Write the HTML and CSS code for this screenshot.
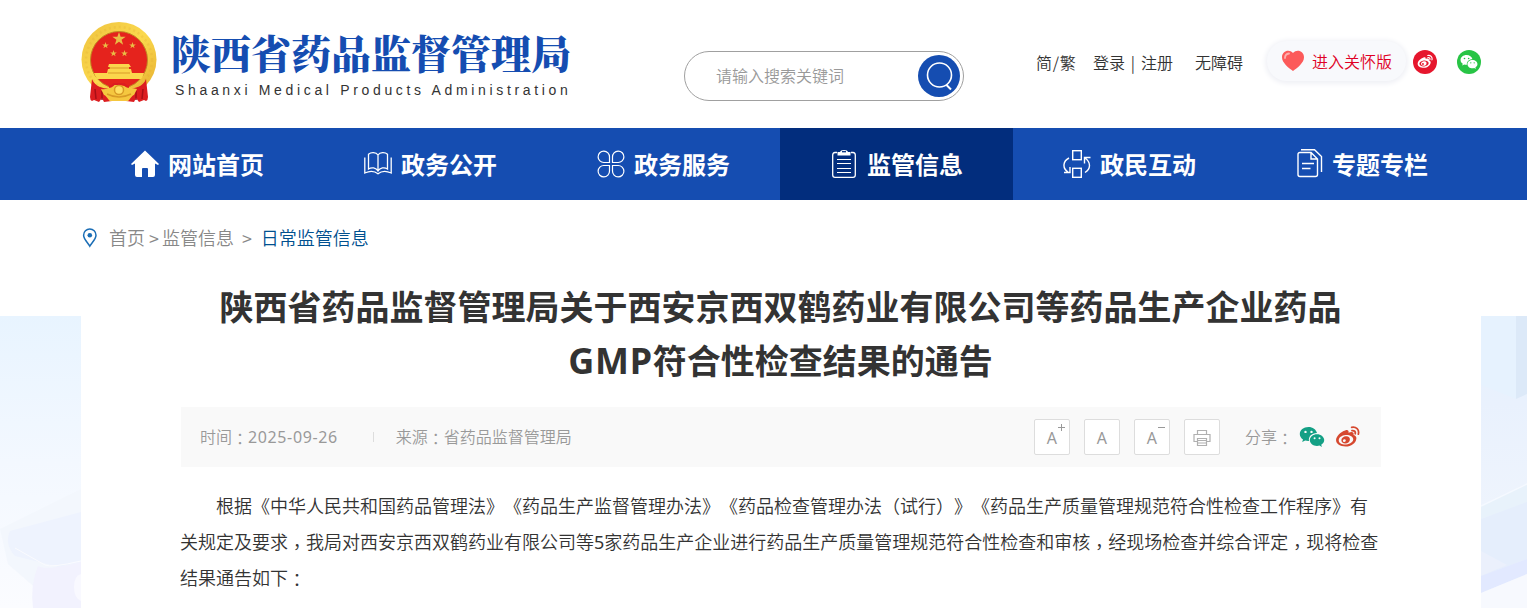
FILE: index.html
```html
<!DOCTYPE html>
<html lang="zh-CN">
<head>
  <meta charset="UTF-8">
  <meta name="viewport" content="width=device-width, initial-scale=1.0">
  <title>陕西省药品监督管理局</title>
  <link rel="stylesheet" href="styles.css">
</head>
<body>
  <svg class="symbols" width="0" height="0">
    <symbol id="weibo" viewBox="0 0 24 24">
      <path fill="currentColor" fill-rule="evenodd" d="M9.800 5.200c2-.8 3.700-.3 3.200 2.200 3-1.300 5.600-.7 4.800 2.100 2 .6 3 1.900 2.700 3.700-.6 4.400-5 7.500-10.200 7.500C5 20.700 1 18.300 1 14.500c0-3.700 4.700-8.200 8.800-9.300zM10.300 9.600c-3.900.3-6.900 2.600-6.700 5.200.2 2.600 3.400 4.200 7.200 3.900 3.900-.3 6.900-2.600 6.700-5.200-.2-2.500-3.400-4.200-7.200-3.900zM10.500 10.800c2.400-.2 4 1.200 3.800 3.300-.2 2.100-2.100 3.600-4.300 3.700-2.300.1-4-1.300-3.900-3.400.2-2 2.100-3.500 4.400-3.600zM8.900 13.600a1.400 1.400 0 1 0 .1 2.800 1.400 1.400 0 0 0-.1-2.800z"/>
      <path d="M16 2.200c4.200-.9 7.600 2.400 6.400 6.600M16.300 5.400c2.200-.4 3.600 1 3.100 3" fill="none" stroke="currentColor" stroke-width="1.700" stroke-linecap="round"/>
    </symbol>
    <symbol id="wechat" viewBox="0 0 26 22">
      <path fill="currentColor" fill-rule="evenodd" d="M9.500 1C4.500 1 .8 4.200.8 8c0 2.300 1.300 4.200 3.200 5.500l-.8 2.600 3-1.500c1.300.4 2.500.5 3.800.4-.9-4.300 3-8 8-7.900C17.200 3.500 13.700 1 9.500 1zM6.500 4.700a1.200 1.200 0 1 1 0 2.400 1.200 1.200 0 0 1 0-2.400zm6 0a1.200 1.200 0 1 1 0 2.400 1.200 1.200 0 0 1 0-2.400z"/>
      <path fill="currentColor" fill-rule="evenodd" d="M18 8.200c-4 0-7.200 2.700-7.200 5.900 0 3.300 3.200 5.900 7.200 5.900.9 0 1.700-.1 2.500-.4l2.400 1.400-.7-2.200c1.800-1.100 3-2.800 3-4.700 0-3.200-3.200-5.900-7.200-5.900zm-2.400 3a1 1 0 1 1 0 2 1 1 0 0 1 0-2zm4.900 0a1 1 0 1 1 0 2 1 1 0 0 1 0-2z"/>
    </symbol>
    <symbol id="star" viewBox="-10 -10 20 20">
      <path d="M0-10 2.300-3.100H9.500L3.700 1.200 5.900 8.100 0 3.900-5.900 8.100-3.700 1.200-9.500-3.100H-2.300z"/>
    </symbol>
  </svg>

  <header class="header">
    <a class="logo">
      <svg class="emblem" width="76" height="82" viewBox="0 0 76 82">
        <defs>
          <linearGradient id="gold" x1="0" y1="0" x2="1" y2="1">
            <stop offset="0" stop-color="#eec23e"/>
            <stop offset=".5" stop-color="#fbd94e"/>
            <stop offset="1" stop-color="#e5ac2c"/>
          </linearGradient>
        </defs>
        <circle cx="38" cy="37.500" r="37.500" fill="url(#gold)"/>
        <circle cx="38" cy="38" r="33" fill="none" stroke="#e1a92f" stroke-width="2.500" stroke-dasharray="2 3" opacity=".25"/>
        <circle cx="38" cy="38" r="28.500" fill="#e5231d" stroke="#c28a24" stroke-width="1"/>
        <g fill="#e9bd45">
          <use href="#star" x="31" y="10" width="14" height="14"/>
          <use href="#star" x="21" y="20" width="7" height="7"/>
          <use href="#star" x="48" y="20" width="7" height="7"/>
          <use href="#star" x="29" y="28" width="7" height="7"/>
          <use href="#star" x="40" y="28" width="7" height="7"/>
        </g>
        <path d="M28 42h20l2 3h-2v2h2l1 4h12q-1 4-3 6H16q-2-3-3-6h13l1-4h2v-2h-2z" fill="#fbd64c"/>
        <path d="M28 46h20M27 51h22" fill="none" stroke="#d99b28"/>
        <path d="M11 57c3 8 11 9 17 10l3 12-8 1-2-4-3 4-5-2-2 1q-2-1-2-4z" fill="#dc1d20"/>
        <path d="M65 57c-3 8-11 9-17 10l-3 12 8 1 2-4 3 4 5-2 2 1q2-1 2-4z" fill="#dc1d20"/>
        <path d="M14 67l1 10M21 69l0 9M62 67l-1 10M55 69l0 9" fill="none" stroke="#a80f16" stroke-width="1.500"/>
        <path d="M20 67q6 1 9-2t9-2 9 2 9 2l-3 6c-2 0-5 6-6 6H29c-1 0-4-6-6-6z" fill="#f5c73f"/>
        <path d="M28 65q4-1 5-3h10q1 2 5 3" fill="none" stroke="#dc1d20" stroke-width="2"/>
        <circle cx="38" cy="68" r="4.500" fill="#ffe063" stroke="#d89b26" stroke-width="1.500"/>
        <path d="M26 72q12 6 24 0" fill="none" stroke="#d89b26" stroke-width="1.500"/>
      </svg>
      <div class="logo-text">
        <div class="logo-cn">陕西省药品监督管理局</div>
        <div class="logo-en">Shaanxi Medical Products Administration</div>
      </div>
    </a>

    <div class="search">
      <span class="search-hint">请输入搜索关键词</span>
      <button class="search-btn" aria-label="搜索">
        <svg width="42" height="42" viewBox="0 0 42 42" fill="none" stroke="#fff" stroke-width="1.600">
          <circle cx="21.500" cy="20" r="12"/>
          <path d="M28.500 30l4.500 4.500" stroke-width="2"/>
        </svg>
      </button>
    </div>

    <div class="tools">
      <a class="lang">简/繁</a>
      <a class="login">登录 | 注册</a>
      <a class="access">无障碍</a>
      <a class="care">
        <svg width="24" height="22" viewBox="0 0 24 22">
          <path d="M12 21C8 18 1 13 1 7.200 1 1.200 8-1.500 12 3c4-4.500 11-1.800 11 4.200C23 13 16 18 12 21z" fill="#fc5a5a"/>
          <path d="M4 8q0-4 4-4.500" fill="none" stroke="#fdb0ae" stroke-width="1.800" stroke-linecap="round"/>
        </svg>
        进入关怀版
      </a>
      <a class="round weibo"><svg width="16" height="16"><use href="#weibo"/></svg></a>
      <a class="round wechat"><svg width="18" height="16"><use href="#wechat"/></svg></a>
    </div>
  </header>

  <nav class="nav">
    <a class="nav-item">
      <svg width="28" height="28" viewBox="0 0 28 28" fill="#fff"><path d="M14 .5 28 14l-1 1-3-1.500v11.500q0 2-2 2h-5v-8q0-1-1-1h-4q-1 0-1 1v8H6q-2 0-2-2V13.500L1 15l-1-1z"/></svg>
      <span>网站首页</span>
    </a>
    <a class="nav-item">
      <svg width="28" height="28" viewBox="0 0 28 28" fill="none" stroke="#fff" stroke-width="1.300"><path d="M14 5v16M14 5c-2-3-7-3-9.500-.8V19c3-2 7.500-1.500 9.500 2 2-3.500 6.500-4 9.500-2V4.200C21 2 16 2 14 5zM.8 7.500V23c5-2.200 10-1.800 13.200.8 3.200-2.600 8.200-3 13.200-.8V7.500"/></svg>
      <span>政务公开</span>
    </a>
    <a class="nav-item">
      <svg width="28" height="28" viewBox="0 0 28 28" fill="none" stroke="#fff" stroke-width="1.200"><path d="M12.500 12.500H7A5.700 5.700 0 1 1 12.500 7zM15.500 12.500V7A5.700 5.700 0 1 1 21 12.500zM12.500 15.500V21A5.700 5.700 0 1 1 7 15.500zM15.500 15.500H21A5.700 5.700 0 1 1 15.500 21z"/></svg>
      <span>政务服务</span>
    </a>
    <a class="nav-item active">
      <svg width="28" height="28" viewBox="0 0 28 28" fill="none" stroke="#fff" stroke-width="1.300"><path d="M7 2.500H5Q2.700 2.500 2.700 5v20q0 2.300 2.300 2.300h18q2.300 0 2.300-2.300V5q0-2.500-2.300-2.500h-2"/><path d="M7 9.500h14M7 13.500h14M7 18.500h14M7 22.500h14" stroke-width="1"/><path d="M7.500 5.500V2H10Q10.500 0 14 0t4 2h2.500v3.500z" fill="#fff" stroke="none"/><path d="M12 1.700h4" stroke="#022d7d"/></svg>
      <span>监管信息</span>
    </a>
    <a class="nav-item">
      <svg width="28" height="28" viewBox="0 0 28 28" fill="none" stroke="#fff" stroke-width="1.400"><rect x="9.700" y=".7" width="8.600" height="9"/><rect x="9.700" y="18.300" width="8.600" height="9"/><path d="M6 8C0 11-1 18 5 22M1 22.500h6V17M22 22.500c6-4 6-10 0-14.500M27.500 7.500H21.500v6"/></svg>
      <span>政民互动</span>
    </a>
    <a class="nav-item">
      <svg class="doc" width="26" height="30" viewBox="0 0 26 30" fill="none" stroke="#fff" stroke-width="1.400"><path d="M14 4.500H3Q1 4.500 1 6.500v20q0 2 2 2h15.500q2 0 2-2V11zM14 4.500V11h6.500M5 15.500h12M5 20.500h8.500M4 1.700h13.500L24.500 8.500V24"/></svg>
      <span>专题专栏</span>
    </a>
  </nav>

  <main class="page">
    <div class="article">
      <div class="crumbs">
        <svg width="16" height="20" viewBox="0 0 16 20" fill="none" stroke="#1a6db5" stroke-width="1.500"><path d="M8.800 18.200C6.800 14.700 2.600 11 2.600 7.200a6.200 6.200 0 0 1 12.400 0C15 11 10.800 14.700 8.800 18.200z"/><circle cx="8.800" cy="7.300" r="2.300" fill="#1a6db5" stroke="none"/></svg>
        <a>首页</a><span class="arrow">&gt;</span><a>监管信息</a><span class="arrow wide">&gt;</span><a class="current">日常监管信息</a>
      </div>

      <h1 class="title">陕西省药品监督管理局关于西安京西双鹤药业有限公司等药品生产企业药品<br><span class="latin">GMP</span>符合性检查结果的通告</h1>

      <div class="meta">
        <span class="date">时间<i lang="zh-TW">：</i><span class="num">2025-09-26</span></span>
        <span class="divider"></span>
        <span class="source">来源<i lang="zh-TW">：</i>省药品监督管理局</span>
        <div class="actions">
          <a class="box">A<svg class="sign" width="7" height="7" viewBox="0 0 7 7"><path d="M0 3.500h7M3.500 0v7" stroke="#999"/></svg></a>
          <a class="box">A</a>
          <a class="box">A<svg class="sign" width="7" height="7" viewBox="0 0 7 7"><path d="M0 3.500h7" stroke="#999"/></svg></a>
          <a class="box print"><svg width="18" height="18" viewBox="0 0 18 18" fill="none" stroke="#b0b0b0" stroke-width="1.200"><path d="M4.500 5.500v-4h9v4M4.500 12.500H1v-7h16v7h-3.500"/><path d="M4.500 9.500h9v7h-9zM5 11.500h8M5 14h8"/></svg></a>
        </div>
        <span class="share">分享<i lang="zh-TW">：</i></span>
        <a class="share-wechat"><svg width="26" height="22"><use href="#wechat"/></svg></a>
        <a class="share-weibo"><svg width="25" height="25"><use href="#weibo"/></svg></a>
      </div>

      <p class="content">根据《中华人民共和国药品管理法》《药品生产监督管理办法》《药品检查管理办法（试行）》《药品生产质量管理规范符合性检查工作程序》有<br>关规定及要求<i class="comma" lang="zh-TW">，</i>我局对西安京西双鹤药业有限公司等<span class="digit">5</span>家药品生产企业进行药品生产质量管理规范符合性检查和审核<i class="comma" lang="zh-TW">，</i>经现场检查并综合评定<i class="comma" lang="zh-TW">，</i>现将检查<br>结果通告如下<i lang="zh-TW">：</i></p>
    </div>

    <svg class="side" width="81" height="292" viewBox="0 0 81 292">
      <defs>
        <linearGradient id="sky" x1="0" y1="0" x2="0" y2="1">
          <stop offset="0" stop-color="#e8f4ff"/>
          <stop offset=".5" stop-color="#f3f8ff"/>
          <stop offset="1" stop-color="#fbfcff"/>
        </linearGradient>
      </defs>
      <path d="M0 0h81v292H0z" fill="url(#sky)"/>
      <path d="M0 213 81 173v119H33l5-18L8 248z" fill="#f3f7fd"/>
      <path d="M10 215 81 196v50l-22 5L15 240Q4 228 10 215z" fill="#eef3fe"/>
      <path d="M38 250q8 5 43-4v46H33q-3-23 5-42z" fill="#f2f2fe"/>
      <path d="M15 232l30 17q6 3 36-4" fill="none" stroke="#fafbff"/>
      <path d="M81 258q-7 2-7 13t7 14z" fill="#f9f9ff"/>
    </svg>
    <svg class="side right" width="46" height="292" viewBox="0 0 46 292">
      <defs>
        <linearGradient id="wall" x1="0" y1="0" x2="0" y2="1">
          <stop offset="0" stop-color="#e5f1fd"/>
          <stop offset=".3" stop-color="#e9f1fd"/>
          <stop offset=".65" stop-color="#eef4fd"/>
          <stop offset="1" stop-color="#e9effd"/>
        </linearGradient>
      </defs>
      <path d="M0 0h46v292H0z" fill="url(#wall)"/>
      <path d="M0 0h35v83L0 69z" fill="#e6f2fe"/>
      <path d="M35 0h11v78l-11 5z" fill="#dce9f8"/>
      <path d="M0 190 46 168v19L0 203z" fill="#e8f2fb"/>
      <path d="M0 190 46 168" stroke="#f5f9ff" stroke-width="1.500"/>
      <path d="M0 203 46 186v57L0 260z" fill="#e5eefc"/>
      <path d="M0 235l26 14L0 260z" fill="#ebf0fc"/>
      <path d="M0 260 46 243v15L0 277z" fill="#e2e9ff"/>
      <path d="M0 277 46 258v34H0z" fill="#f7f9fe"/>
    </svg>
  </main>
</body>
</html>
```
FILE: styles.css
```css
* {
  box-sizing: border-box;
}

body {
  margin: 0;
  font-family: "Noto Sans CJK SC", sans-serif;
  font-size: 16px;
  color: #333;
  background: #fff;
  overflow: hidden;
  text-spacing-trim: space-all;
}

/* centred full-width punctuation */
i {
  font-style: normal;
  font-family: "Noto Sans CJK TC", sans-serif;
  line-height: 0;
  vertical-align: -2px;
}

i.comma {
  vertical-align: -5px;
}

svg {
  display: block;
  flex-shrink: 0;
}

.symbols {
  display: none;
}

.header {
  height: 128px;
  padding-left: 81px;
  display: flex;
  align-items: flex-start;
}

.logo {
  display: flex;
  width: 603px;
  padding-top: 22px;
}

.logo-text {
  padding: 5px 0 0 14px;
  white-space: nowrap;
}

.logo-cn {
  font-family: "Noto Serif CJK SC", "Noto Sans CJK SC", serif;
  font-size: 40px;
  font-weight: 900;
  line-height: 50px;
  color: #154db1;
}

.logo-en {
  font-family: "Liberation Sans", Arial, sans-serif;
  font-size: 14px;
  line-height: 20px;
  letter-spacing: 3.66px;
  margin-top: 3px;
  padding-left: 4px;
}

.search {
  width: 280px;
  height: 50px;
  margin-top: 51px;
  border: 1px solid #a0a0a0;
  border-radius: 25px;
  display: flex;
  align-items: center;
  justify-content: space-between;
  padding: 0 3px 0 31px;
}

.search-hint {
  color: #999;
  font-weight: 350;
  padding-bottom: 2px;
}

.search-btn {
  width: 42px;
  height: 42px;
  padding: 0;
  border: 0;
  border-radius: 50%;
  background: #154db1;
}

.tools {
  display: flex;
  align-items: center;
  height: 44px;
  margin: 40px 0 0 72px;
  white-space: nowrap;
  font-weight: 350;
}

.tools > a {
  padding-bottom: 1px;
}

.lang {
  width: 57px;
  letter-spacing: .7px;
}

.login {
  width: 102px;
  word-spacing: 2.3px;
}

.access {
  width: 72px;
}

.tools > .care {
  width: 139px;
  height: 40px;
  margin-top: -3px;
  margin-right: 7px;
  padding: 1px 0 0 14px;
  display: flex;
  align-items: center;
  gap: 7px;
  color: #df0024;
  background: #f8f9fc;
  border-radius: 20px;
  box-shadow: 0 1px 5px 2px #f0f1f6;
}

.tools > .round {
  width: 24px;
  height: 24px;
  padding: 0;
  border-radius: 50%;
  color: #fff;
  display: flex;
  align-items: center;
  justify-content: center;
}

.weibo {
  background: #e6162d;
  margin-right: 20px;
}

.wechat {
  background: #28c445;
}

.nav {
  height: 72px;
  padding-left: 81px;
  display: flex;
  background: #154db1;
}

.nav-item {
  width: 233px;
  display: flex;
  align-items: center;
  justify-content: center;
  gap: 9px;
  color: #fff;
  font-size: 24px;
  font-weight: 700;
}

.nav-item span {
  padding-bottom: 2px;
}

.nav-item .doc {
  margin-top: -3px;
}

.nav-item.active {
  background: #022d7d;
}

.page {
  position: relative;
  height: 408px;
  padding-left: 81px;
}

.article {
  width: 1400px;
  padding: 0 100px;
}

.side {
  position: absolute;
  left: 0;
  top: 116px;
}

.side.right {
  left: auto;
  right: 0;
}

.crumbs {
  display: flex;
  align-items: center;
  height: 76px;
  margin-left: -100px;
  font-size: 18px;
  font-weight: 350;
  color: #888;
}

.crumbs svg {
  margin-right: 12px;
}

.crumbs a {
  padding-bottom: 2px;
}

.arrow {
  margin: 0 3px 0 4px;
}

.arrow.wide {
  margin: 0 9px 0 8px;
}

.current {
  color: #00508f;
}

.title {
  margin: 4px 0 0 -1px;
  font-family: "Noto Sans", "Noto Sans CJK SC", sans-serif;
  font-size: 34px;
  font-weight: 700;
  line-height: 54px;
  text-align: center;
  white-space: nowrap;
}

.title .latin {
  font-size: 36px;
  line-height: 0;
  letter-spacing: .7px;
}

.meta {
  height: 60px;
  margin-top: 19px;
  padding: 0 21px 0 19px;
  display: flex;
  align-items: center;
  background: #f9f9f9;
  color: #999;
  font-family: "Noto Sans", "Noto Sans CJK SC", sans-serif;
}

.date,
.source,
.share {
  padding-bottom: 2px;
  font-weight: 350;
}

.num {
  font-weight: 400;
  letter-spacing: .62px;
}

.divider {
  width: 1px;
  height: 10px;
  margin: 0 22px 0 35px;
  background: #ddd;
}

.actions {
  display: flex;
  gap: 14px;
  margin-left: auto;
}

.box {
  position: relative;
  width: 36px;
  height: 36px;
  padding-top: 2px;
  display: flex;
  align-items: center;
  justify-content: center;
  background: #fff;
  border: 1px solid #ddd;
  border-radius: 2px;
}

.sign {
  position: absolute;
  top: 4px;
  right: 4px;
}

.share {
  margin: 0 6px 0 25px;
}

.share-wechat {
  color: #14a085;
  margin-right: 10px;
}

.share-weibo {
  color: #d6482f;
}

.content {
  margin: 21px 0 0 -1px;
  font-family: "Noto Sans", "Noto Sans CJK SC", sans-serif;
  font-size: 18px;
  font-weight: 350;
  line-height: 36px;
  text-indent: 36px;
  white-space: nowrap;
}

.digit {
  font-weight: 400;
}
```
